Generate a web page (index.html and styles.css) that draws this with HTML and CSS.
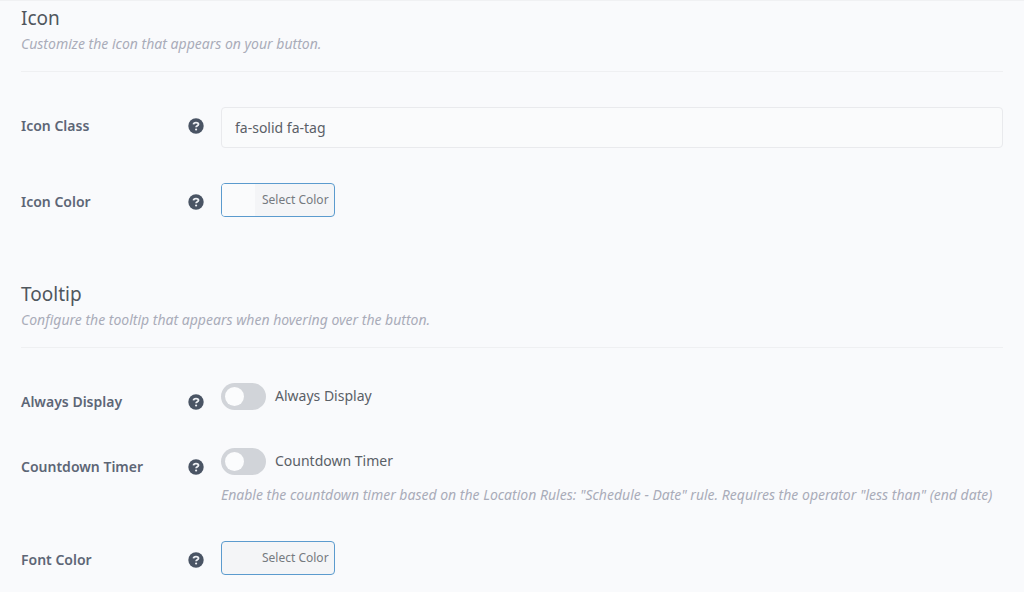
FILE: index.html
```
<!DOCTYPE html>
<html lang="en">
<head>
<meta charset="utf-8">
<meta name="viewport" content="width=device-width, initial-scale=1">
<title>Button settings</title>
<link rel="stylesheet" href="styles.css">
</head>
<body>
<svg class="sprite" aria-hidden="true">
  <symbol id="help" viewBox="0 0 16 16">
    <circle cx="8" cy="8" r="7.700" fill="currentColor"/>
    <path d="M5.500 6.400C5.600 5.100 6.600 4.600 8 4.600c1.500 0 2.500.600 2.500 1.700 0 1.500-2.400 1.400-2.400 3" fill="none" stroke="#eef0f4" stroke-width="1.800"/>
    <circle cx="8.100" cy="11.500" r="1.100" fill="#eef0f4"/>
  </symbol>
</svg>
<form class="settings">
  <section class="section">
    <header class="section-head">
      <h2 class="title">Icon</h2>
      <p class="hint">Customize the icon that appears on your button.</p>
    </header>
    <div class="row">
      <div class="name"><label for="icon-class">Icon Class</label><svg class="help"><use href="#help"/></svg></div>
      <div class="control"><input class="text" id="icon-class" type="text" value="fa-solid fa-tag"></div>
    </div>
    <div class="row">
      <div class="name"><label for="icon-color">Icon Color</label><svg class="help"><use href="#help"/></svg></div>
      <div class="control"><button class="color" id="icon-color" type="button"><span class="swatch swatch-light"></span><span class="color-text">Select Color</span></button></div>
    </div>
  </section>
  <section class="section">
    <header class="section-head">
      <h2 class="title">Tooltip</h2>
      <p class="hint">Configure the tooltip that appears when hovering over the button.</p>
    </header>
    <div class="row">
      <div class="name"><span>Always Display</span><svg class="help"><use href="#help"/></svg></div>
      <div class="control"><label class="switch"><input class="toggle" type="checkbox">Always Display</label></div>
    </div>
    <div class="row">
      <div class="name"><span>Countdown Timer</span><svg class="help"><use href="#help"/></svg></div>
      <div class="control">
        <label class="switch"><input class="toggle" type="checkbox">Countdown Timer</label>
        <p class="hint note">Enable the countdown timer based on the Location Rules: "Schedule - Date" rule. Requires the operator "less than" (end date)</p>
      </div>
    </div>
    <div class="row">
      <div class="name"><label for="font-color">Font Color</label><svg class="help"><use href="#help"/></svg></div>
      <div class="control"><button class="color" id="font-color" type="button"><span class="swatch"></span><span class="color-text">Select Color</span></button></div>
    </div>
  </section>
</form>
</body>
</html>
```
FILE: styles.css
```
* { box-sizing: border-box; }
body {
  margin: 0;
  background: #f9fafc;
  color: #5a6067;
  font: 14px/22px "Segoe UI", "Noto Sans", "Open Sans", sans-serif;
}
.sprite { display: none; }
.settings {
  border-top: 1px solid #f0f1f3;
  padding: 3px 21px 0;
}
.section { margin-bottom: 28px; }
.section:last-child { margin-bottom: 0; }
.section-head {
  border-bottom: 1px solid #eff0f2;
  padding-bottom: 16px;
}
.title {
  margin: 0 0 1px;
  font-size: 19px;
  line-height: 28px;
  font-weight: 400;
  color: #50575e;
}
.hint {
  margin: 0;
  font-style: italic;
  color: #a9acb9;
}
.row {
  display: grid;
  grid-template-columns: 183px minmax(0, 1fr);
  column-gap: 17px;
  padding-top: 35px;
}
.section .row:last-child { padding-bottom: 35px; }
.section:last-child .row:last-child { padding-bottom: 0; }
.name {
  display: flex;
  align-items: center;
  justify-content: space-between;
  align-self: start;
  padding-top: 8px;
  font-weight: 600;
  color: #5d6676;
}
.help {
  width: 16px;
  height: 16px;
  color: #4a5464;
}
.text {
  display: block;
  width: 100%;
  height: 41px;
  padding: 0 13px;
  border: 1px solid #e9eaed;
  border-radius: 4px;
  background: #fafbfc;
  color: #5a6067;
  font: inherit;
}
.color {
  display: flex;
  height: 34px;
  padding: 0;
  border: 1px solid #5b9bce;
  border-radius: 4px;
  background: #f4f5f7;
  color: #757a80;
  font: 12px/32px "Segoe UI", "Noto Sans", "Open Sans", sans-serif;
  overflow: hidden;
}
.swatch {
  width: 33px;
  align-self: stretch;
}
.swatch-light { background: #fafbfc; }
.color-text { padding: 0 5px 0 7px; }
.switch {
  display: flex;
  align-items: flex-start;
  gap: 9px;
  width: fit-content;
  line-height: 26px;
}
.toggle {
  appearance: none;
  flex: none;
  display: flex;
  align-items: center;
  width: 45px;
  height: 27px;
  margin: 0;
  padding: 0 4px;
  border-radius: 14px;
  background: #d1d4d9;
}
.toggle::before {
  content: "";
  width: 19px;
  height: 19px;
  border-radius: 50%;
  background: #fbfcfd;
}
.toggle:checked { justify-content: flex-end; }
.note { margin-top: 9px; }
```
